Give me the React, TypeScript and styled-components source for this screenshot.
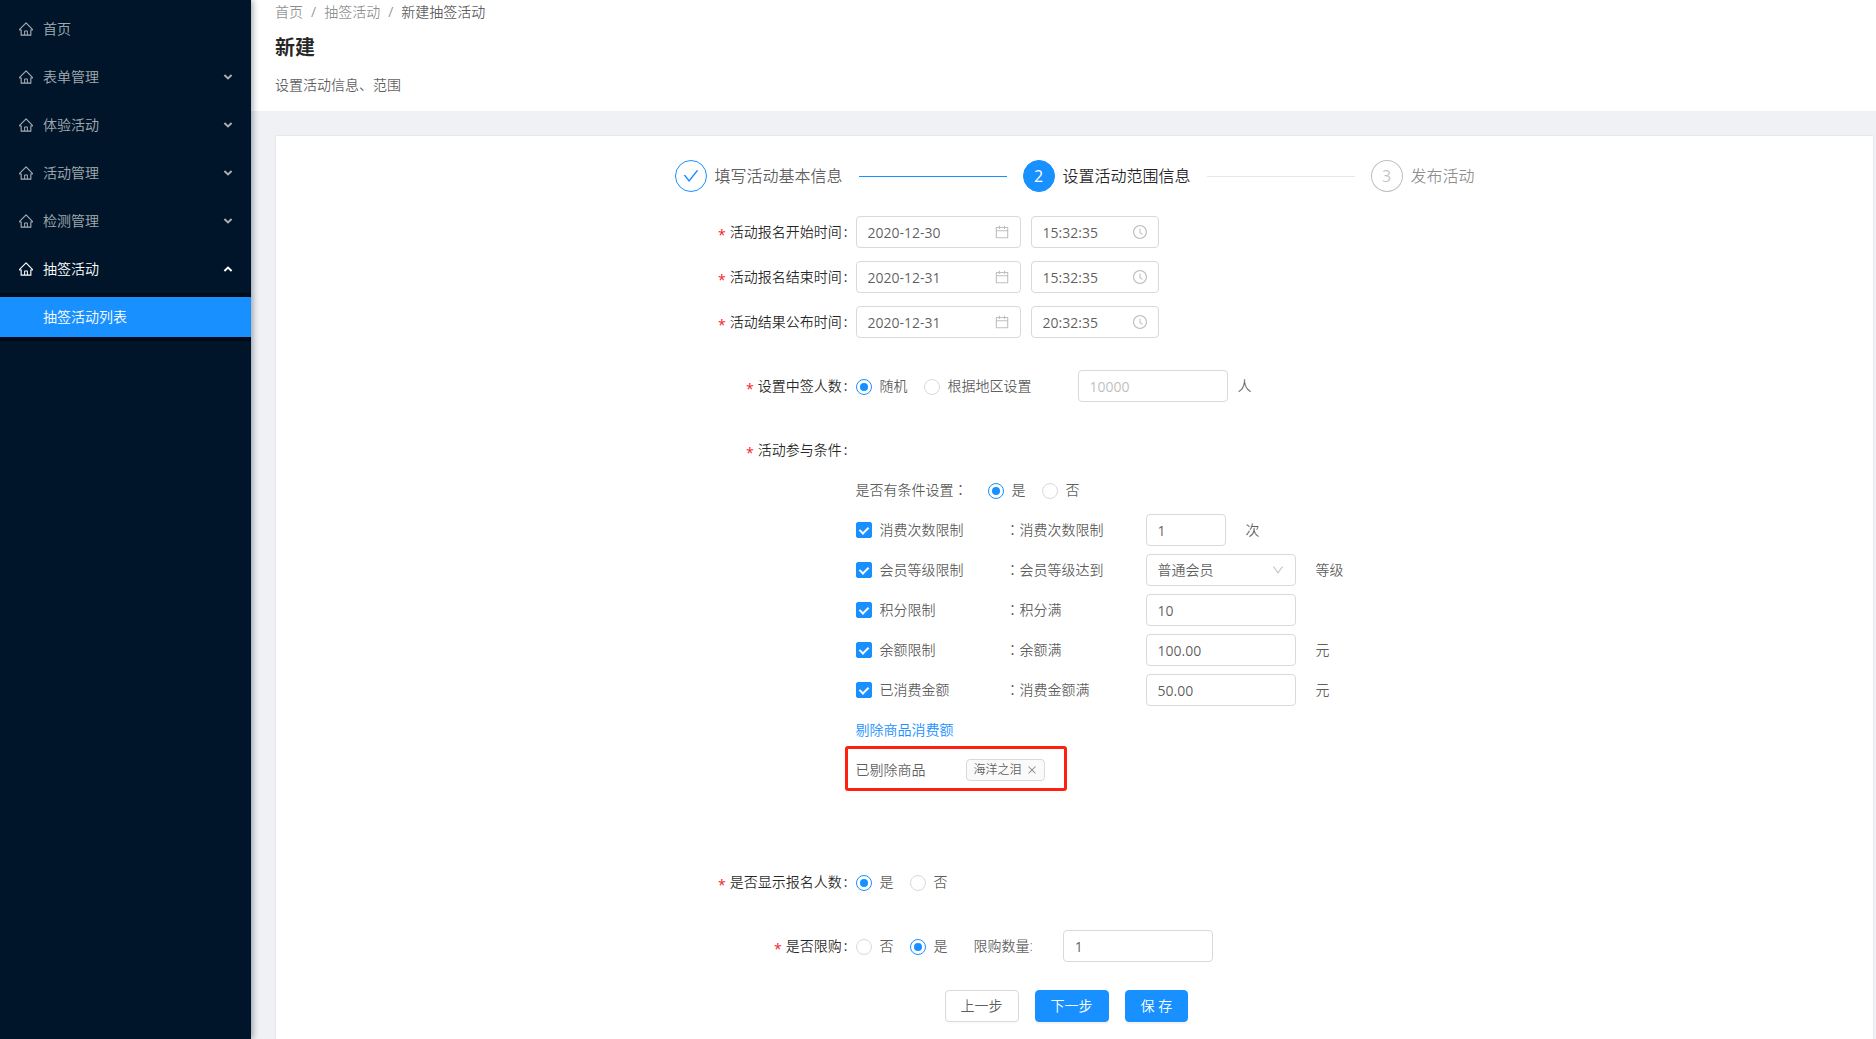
import React, { useState } from "react";
import styled, { createGlobalStyle, css } from "styled-components";
import {
  AiOutlineCalendar,
  AiOutlineCheck,
  AiOutlineClockCircle,
  AiOutlineClose,
  AiOutlineDown,
  AiOutlineHome,
} from "react-icons/ai";

const color = {
  primary: "#1890ff",
  heading: "rgba(0, 0, 0, 0.85)",
  text: "rgba(0, 0, 0, 0.65)",
  secondary: "rgba(0, 0, 0, 0.45)",
  disabled: "rgba(0, 0, 0, 0.25)",
  border: "#d9d9d9",
  page: "#eff1f5",
  danger: "#f5222d",
};

const GlobalStyle = createGlobalStyle`
  *, *::before, *::after { box-sizing: border-box; }
  body {
    margin: 0;
    background: ${color.page};
    color: ${color.text};
    font-family: "Open Sans", "Noto Sans CJK SC", sans-serif;
    font-size: 14px;
    font-weight: 350;
    line-height: 22px;
  }
  ul, ol, p, h1 { margin: 0; padding: 0; list-style: none; }
  button, input, select { font: inherit; color: inherit; margin: 0; }
  a { color: inherit; text-decoration: none; }
`;

/* ---------- layout ---------- */

const Shell = styled.div`
  display: flex;
  min-height: 100vh;
`;

const Sider = styled.nav`
  position: relative;
  z-index: 1;
  flex: 0 0 251px;
  padding-top: 5px;
  background: #001529;
  box-shadow: 2px 0 6px rgba(0, 21, 41, 0.35);
`;

const Main = styled.main`
  display: flex;
  flex: 1;
  flex-direction: column;
  min-width: 0;
`;

const PageHeader = styled.header`
  padding: 0 24px 15px;
  background: #fff;
`;

const Content = styled.div`
  display: flex;
  flex: 1;
  padding: 24px 2px 0 24px;
`;

const Card = styled.section`
  flex: 1;
  padding: 24px 16px 16px;
  background: #fff;
  border: 1px solid #e8e8ec;
  border-bottom: 0;
  border-radius: 2px 2px 0 0;
`;

/* ---------- side menu ---------- */

const Menu = styled.ul`
  display: grid;
  gap: 8px;
  padding-top: 4px;
`;

const MenuButton = styled.button<{ $open?: boolean }>`
  display: flex;
  align-items: center;
  gap: 10px;
  width: 100%;
  height: 40px;
  padding: 0 18px 0 19px;
  border: 0;
  background: none;
  color: ${(p) => (p.$open ? "#fff" : "rgba(255, 255, 255, 0.65)")};
  text-align: left;
  cursor: pointer;
`;

const MenuText = styled.span`
  flex: 1;
`;

const Arrow = styled.svg<{ $up?: boolean }>`
  width: 10px;
  height: 6px;
  fill: none;
  stroke: currentColor;
  stroke-width: 2;
  ${(p) => p.$up && css`transform: rotate(180deg);`}
`;

const SubMenu = styled.ul`
  margin-top: 4px;
  padding: 4px 0;
  background: #000c17;
`;

const SubLink = styled.a`
  display: block;
  padding-left: 43px;
  background: ${color.primary};
  color: #fff;
  line-height: 40px;
`;

/* ---------- page header ---------- */

const Crumb = styled.li<{ $current?: boolean }>`
  color: ${(p) => (p.$current ? color.text : color.secondary)};
`;

const Crumbs = styled.ol`
  display: flex;
  line-height: 24px;

  li + li::before {
    content: "/";
    padding: 0 8px;
    color: ${color.secondary};
    font-weight: 400;
  }
`;

const Title = styled.h1`
  margin-top: 8px;
  color: ${color.heading};
  font-size: 20px;
  font-weight: 700;
  line-height: 32px;
`;

const Description = styled.p`
  margin-top: 10px;
`;

/* ---------- steps ---------- */

type Status = "done" | "active" | "wait";

const Steps = styled.ol`
  display: flex;
  gap: 16px;
  max-width: 800px;
  margin: 0 auto 24px;
`;

const Step = styled.li<{ $status: Status }>`
  display: flex;
  flex: 1;
  align-items: center;
  gap: 8px;
  color: ${(p) => ({ done: color.text, active: color.heading, wait: color.secondary })[p.$status]};
  font-size: 16px;
  line-height: 32px;
  white-space: nowrap;

  &:last-child { flex: none; }
  &:not(:last-child)::after {
    content: "";
    flex: 1;
    height: 1px;
    margin-left: 8px;
    background: ${(p) => (p.$status === "done" ? color.primary : "#e8e8e8")};
  }
`;

const StepIcon = styled.span<{ $status: Status }>`
  display: flex;
  align-items: center;
  justify-content: center;
  width: 32px;
  height: 32px;
  border: 1px solid ${(p) => (p.$status === "wait" ? "rgba(0, 0, 0, 0.25)" : color.primary)};
  border-radius: 50%;
  background: ${(p) => (p.$status === "active" ? color.primary : "#fff")};
  color: ${(p) => ({ done: color.primary, active: "#fff", wait: color.disabled })[p.$status]};
  font-weight: 400;
`;

/* ---------- form ---------- */

const Form = styled.form`
  max-width: 800px;
  margin: 0 auto;
`;

const Field = styled.div<{ $gap: number }>`
  display: grid;
  grid-template-columns: 173px 1fr;
  column-gap: 8px;
  margin-bottom: ${(p) => p.$gap}px;
  line-height: 32px;
`;

const FieldLabel = styled.label`
  display: flex;
  align-items: flex-start;
  justify-content: flex-end;
  height: 32px;
  color: ${color.heading};
  white-space: nowrap;

  &::before {
    content: "*";
    margin: 3px 4px 0 0;
    color: ${color.danger};
    font-weight: 400;
  }
  &::after {
    content: ":";
    margin-left: 2px;
    font-weight: 400;
  }
`;

const Control = styled.div`
  display: flex;
  align-items: center;
  height: 32px;
  white-space: nowrap;
`;

const box = css`
  width: 100%;
  height: 32px;
  padding: 4px 11px;
  border: 1px solid ${color.border};
  border-radius: 4px;
  background: #fff;
  color: ${color.text};
  line-height: 22px;
  outline: none;
  &:focus { border-color: ${color.primary}; }
`;

const BoxWrap = styled.span<{ $width: number; $left?: number }>`
  position: relative;
  display: block;
  flex: none;
  width: ${(p) => p.$width}px;
  height: 32px;
  margin-left: ${(p) => p.$left ?? 0}px;

  svg {
    position: absolute;
    top: 50%;
    right: 12px;
    color: ${color.disabled};
    transform: translateY(-50%);
    pointer-events: none;
  }
`;

const TextBox = styled.input`
  ${box}
  font-weight: 400;
  &::placeholder { color: #bfbfbf; opacity: 1; }
`;

const SelectBox = styled.select`
  ${box}
  appearance: none;
`;

const Choice = styled.label`
  display: inline-flex;
  align-items: center;
  gap: 8px;
  margin-right: 16px;
`;

const Radio = styled.input.attrs({ type: "radio" })`
  display: grid;
  place-items: center;
  appearance: none;
  width: 16px;
  height: 16px;
  margin-top: 2px;
  border: 1px solid ${color.border};
  border-radius: 50%;
  background: #fff;

  &:checked { border-color: ${color.primary}; }
  &:checked::after {
    content: "";
    width: 8px;
    height: 8px;
    border-radius: 50%;
    background: ${color.primary};
  }
`;

const Checkbox = styled.input.attrs({ type: "checkbox" })`
  display: grid;
  place-items: center;
  appearance: none;
  width: 16px;
  height: 16px;
  border: 1px solid ${color.border};
  border-radius: 2px;
  background: #fff;

  &:checked {
    border-color: ${color.primary};
    background: ${color.primary};
  }
  &:checked::after {
    content: "";
    width: 6px;
    height: 9px;
    margin-bottom: 2px;
    border: solid #fff;
    border-width: 0 2px 2px 0;
    transform: rotate(45deg);
  }
`;

const Conditions = styled.div`
  display: grid;
  grid-row: 2;
  grid-column: 2;
  gap: 8px;
  margin-top: 8px;
`;

const Question = styled.span`
  margin-right: 20px;
`;

const Colon = styled.span`
  font-family: "Noto Sans CJK JP", sans-serif;
  line-height: 22px;
`;

const LimitRow = styled.div`
  display: grid;
  grid-template-columns: 150px 140px auto 1fr;
  align-items: center;
  height: 32px;
`;

const Unit = styled.span<{ $left: number }>`
  margin-left: ${(p) => p.$left}px;
`;

const TextLink = styled.a`
  color: ${color.primary};
`;

const Removed = styled.div`
  position: relative;
  display: flex;
  align-items: center;
  gap: 40px;
  height: 32px;

  &::after {
    content: "";
    position: absolute;
    top: -8px;
    left: -11px;
    width: 222px;
    height: 45px;
    border: 3px solid #ff200f;
    border-radius: 3px;
    pointer-events: none;
  }
`;

const Tag = styled.span`
  display: inline-flex;
  align-items: center;
  gap: 5px;
  height: 22px;
  padding: 0 7px;
  border: 1px solid ${color.border};
  border-radius: 4px;
  background: #fafafa;
  font-size: 12px;
  line-height: 20px;
`;

const TagClose = styled.button`
  display: flex;
  padding: 0;
  border: 0;
  background: none;
  color: ${color.secondary};
  cursor: pointer;
`;

const InlineLabel = styled.label`
  margin-left: 10px;
`;

const Actions = styled.div`
  display: flex;
  gap: 16px;
  padding-left: 270px;
`;

const Button = styled.button<{ $primary?: boolean }>`
  height: 32px;
  padding: 0 15px;
  border: 1px solid ${(p) => (p.$primary ? color.primary : color.border)};
  border-radius: 4px;
  background: ${(p) => (p.$primary ? color.primary : "#fff")};
  box-shadow: 0 2px 0 rgba(0, 0, 0, ${(p) => (p.$primary ? 0.045 : 0.015)});
  color: ${(p) => (p.$primary ? "#fff" : color.text)};
  cursor: pointer;
`;

/* ---------- data ---------- */

const iconView = "64 64 896 896";

const groups = ["表单管理", "体验活动", "活动管理", "检测管理"];

const times = [
  { id: "start", label: "活动报名开始时间", date: "2020-12-30", time: "15:32:35" },
  { id: "end", label: "活动报名结束时间", date: "2020-12-31", time: "15:32:35" },
  { id: "result", label: "活动结果公布时间", date: "2020-12-31", time: "20:32:35" },
];

const limits = [
  { id: "count", name: "消费次数限制", rule: "消费次数限制", value: "1", unit: "次", width: 80 },
  { id: "level", name: "会员等级限制", rule: "会员等级达到", value: "普通会员", unit: "等级", width: 150, select: true },
  { id: "points", name: "积分限制", rule: "积分满", value: "10", unit: "", width: 150 },
  { id: "balance", name: "余额限制", rule: "余额满", value: "100.00", unit: "元", width: 150 },
  { id: "spent", name: "已消费金额", rule: "消费金额满", value: "50.00", unit: "元", width: 150 },
];

function MenuArrow({ up }: { up?: boolean }) {
  return (
    <Arrow $up={up} viewBox="0 0 10 6" aria-hidden="true">
      <path d="M1.4 1 L5 4.4 L8.6 1" />
    </Arrow>
  );
}

function HomeIcon() {
  return <AiOutlineHome size={14} viewBox={iconView} />;
}

function RadioPair({ name, options, checked }: { name: string; options: string[]; checked: number }) {
  return (
    <>
      {options.map((option, i) => (
        <Choice key={option}>
          <Radio name={name} defaultChecked={i === checked} />
          {option}
        </Choice>
      ))}
    </>
  );
}

export default function App() {
  const [tags, setTags] = useState(["海洋之泪"]);

  return (
    <>
      <GlobalStyle />
      <Shell>
        <Sider aria-label="主菜单">
          <Menu>
            <li>
              <MenuButton type="button">
                <HomeIcon />
                <MenuText>首页</MenuText>
              </MenuButton>
            </li>
            {groups.map((name) => (
              <li key={name}>
                <MenuButton type="button" aria-expanded={false}>
                  <HomeIcon />
                  <MenuText>{name}</MenuText>
                  <MenuArrow />
                </MenuButton>
              </li>
            ))}
            <li>
              <MenuButton type="button" $open aria-expanded>
                <HomeIcon />
                <MenuText>抽签活动</MenuText>
                <MenuArrow up />
              </MenuButton>
              <SubMenu>
                <li>
                  <SubLink href="#list" aria-current="page">抽签活动列表</SubLink>
                </li>
              </SubMenu>
            </li>
          </Menu>
        </Sider>

        <Main>
          <PageHeader>
            <Crumbs>
              <Crumb><a href="#home">首页</a></Crumb>
              <Crumb><a href="#lottery">抽签活动</a></Crumb>
              <Crumb $current>新建抽签活动</Crumb>
            </Crumbs>
            <Title>新建</Title>
            <Description>设置活动信息、范围</Description>
          </PageHeader>

          <Content>
            <Card>
              <Steps>
                <Step $status="done">
                  <StepIcon $status="done"><AiOutlineCheck size={16} viewBox={iconView} /></StepIcon>
                  填写活动基本信息
                </Step>
                <Step $status="active">
                  <StepIcon $status="active">2</StepIcon>
                  设置活动范围信息
                </Step>
                <Step $status="wait">
                  <StepIcon $status="wait">3</StepIcon>
                  发布活动
                </Step>
              </Steps>

              <Form onSubmit={(e) => e.preventDefault()}>
                {times.map((t, i) => (
                  <Field key={t.id} $gap={i === times.length - 1 ? 32 : 13}>
                    <FieldLabel htmlFor={t.id}>{t.label}</FieldLabel>
                    <Control>
                      <BoxWrap $width={165}>
                        <TextBox id={t.id} defaultValue={t.date} />
                        <AiOutlineCalendar size={14} viewBox={iconView} />
                      </BoxWrap>
                      <BoxWrap $width={128} $left={10}>
                        <TextBox aria-label={t.label} defaultValue={t.time} />
                        <AiOutlineClockCircle size={14} viewBox={iconView} />
                      </BoxWrap>
                    </Control>
                  </Field>
                ))}

                <Field $gap={32}>
                  <FieldLabel htmlFor="winners">设置中签人数</FieldLabel>
                  <Control>
                    <RadioPair name="mode" options={["随机", "根据地区设置"]} checked={0} />
                    <BoxWrap $width={150} $left={30}>
                      <TextBox id="winners" placeholder="10000" />
                    </BoxWrap>
                    <Unit $left={10}>人</Unit>
                  </Control>
                </Field>

                <Field $gap={80}>
                  <FieldLabel as="span">活动参与条件</FieldLabel>
                  <Conditions>
                    <Control>
                      <Question>是否有条件设置<Colon>：</Colon></Question>
                      <RadioPair name="conditional" options={["是", "否"]} checked={0} />
                    </Control>
                    {limits.map((l) => (
                      <LimitRow key={l.id}>
                        <Choice>
                          <Checkbox defaultChecked />
                          {l.name}
                        </Choice>
                        <label htmlFor={l.id}><Colon>：</Colon>{l.rule}</label>
                        <BoxWrap $width={l.width}>
                          {l.select ? (
                            <>
                              <SelectBox id={l.id} defaultValue={l.value}>
                                <option>{l.value}</option>
                              </SelectBox>
                              <AiOutlineDown size={12} viewBox={iconView} />
                            </>
                          ) : (
                            <TextBox id={l.id} defaultValue={l.value} />
                          )}
                        </BoxWrap>
                        <Unit $left={20}>{l.unit}</Unit>
                      </LimitRow>
                    ))}
                    <div><TextLink href="#exclude">剔除商品消费额</TextLink></div>
                    <Removed>
                      <span>已剔除商品</span>
                      {tags.map((tag) => (
                        <Tag key={tag}>
                          {tag}
                          <TagClose type="button" aria-label="移除" onClick={() => setTags(tags.filter((t) => t !== tag))}>
                            <AiOutlineClose size={10} viewBox={iconView} />
                          </TagClose>
                        </Tag>
                      ))}
                    </Removed>
                  </Conditions>
                </Field>

                <Field $gap={32}>
                  <FieldLabel as="span">是否显示报名人数</FieldLabel>
                  <Control>
                    <RadioPair name="show" options={["是", "否"]} checked={0} />
                  </Control>
                </Field>

                <Field $gap={28}>
                  <FieldLabel as="span">是否限购</FieldLabel>
                  <Control>
                    <RadioPair name="limited" options={["否", "是"]} checked={1} />
                    <InlineLabel htmlFor="quota">限购数量:</InlineLabel>
                    <BoxWrap $width={150} $left={30}>
                      <TextBox id="quota" defaultValue="1" />
                    </BoxWrap>
                  </Control>
                </Field>

                <Actions>
                  <Button type="button">上一步</Button>
                  <Button type="submit" $primary>下一步</Button>
                  <Button type="button" $primary>保 存</Button>
                </Actions>
              </Form>
            </Card>
          </Content>
        </Main>
      </Shell>
    </>
  );
}
